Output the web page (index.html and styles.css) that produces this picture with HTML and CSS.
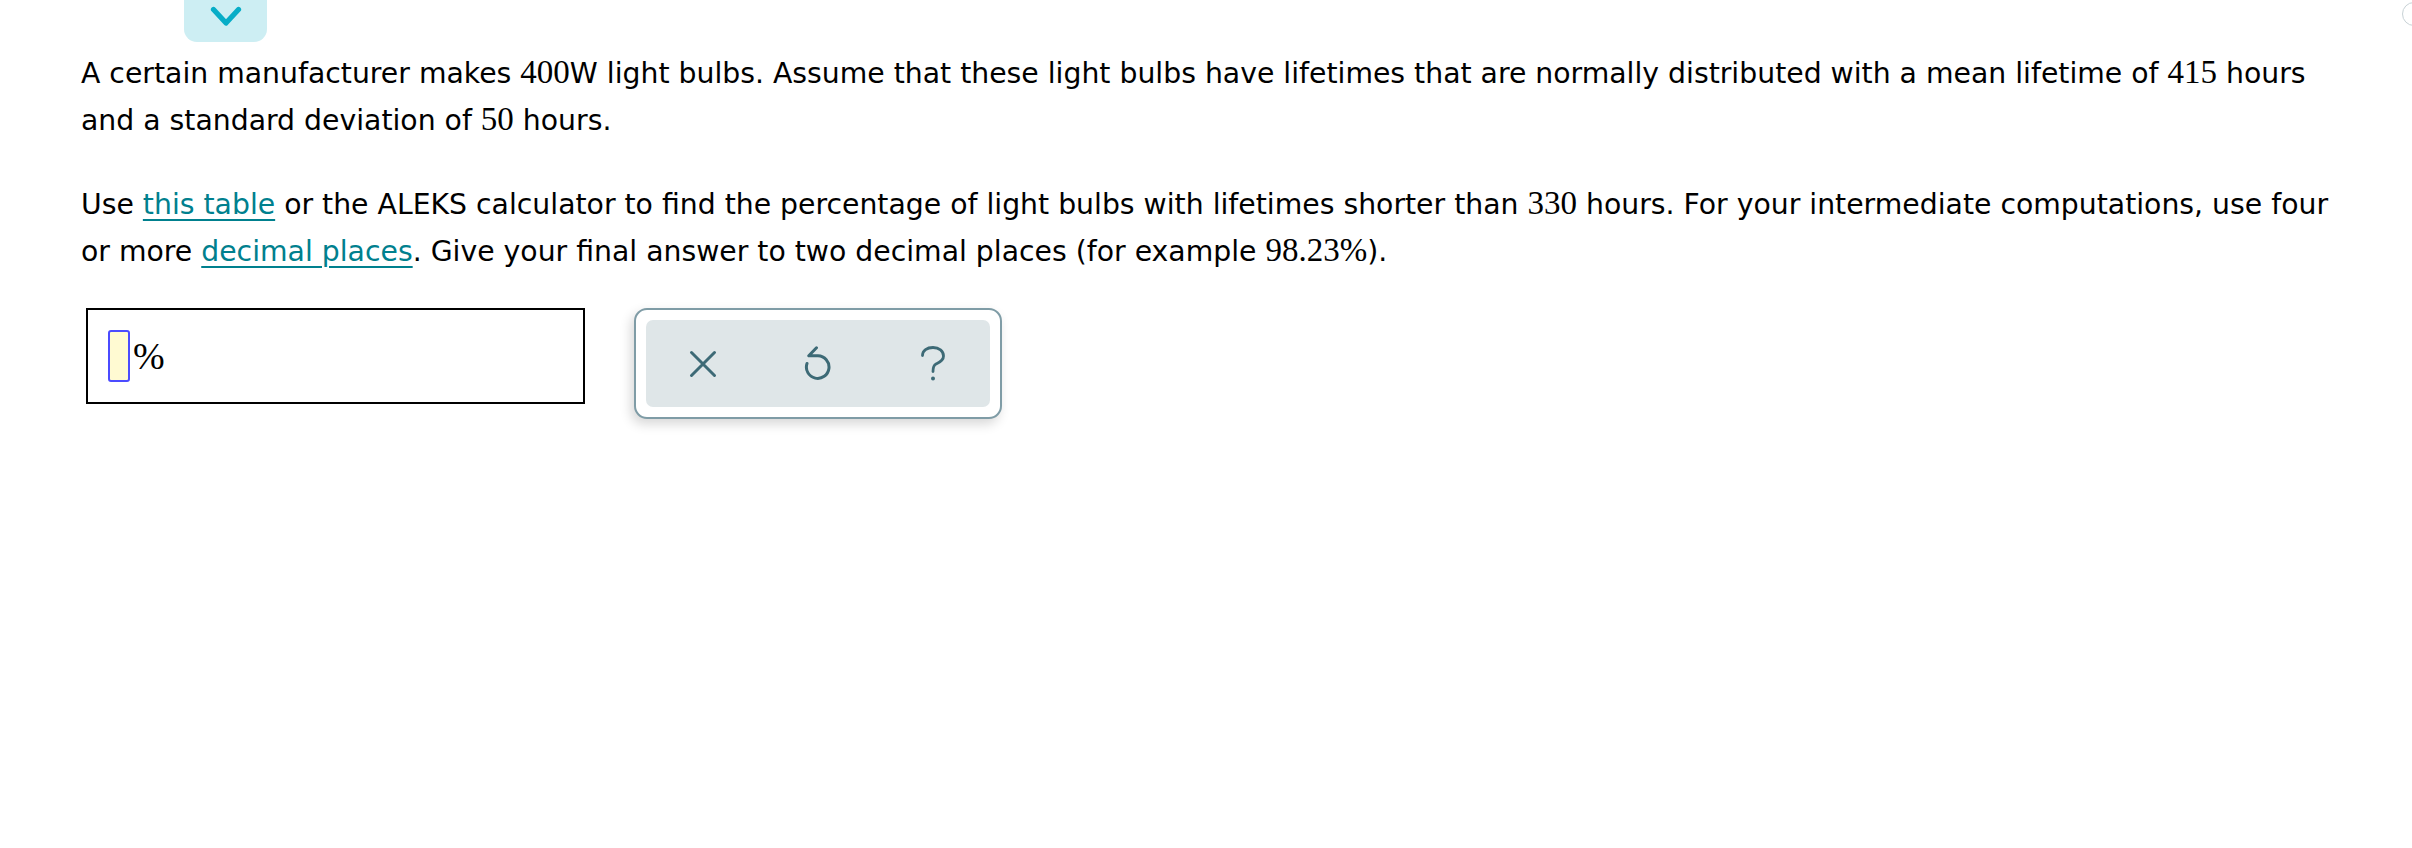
FILE: index.html
```html
<!DOCTYPE html>
<html lang="en">
<head>
<meta charset="utf-8">
<title>ALEKS question</title>
<link rel="stylesheet" href="styles.css">
</head>
<body>
<div class="page">
  <div class="topbar">
    <div class="tab">
      <svg class="chevron" width="32" height="22" viewBox="0 0 32 22"><polyline points="3.5,3.5 16,17 28.5,3.5" fill="none" stroke="#07adc7" stroke-width="5.2" stroke-linecap="round" stroke-linejoin="round"/></svg>
    </div>
  </div>
  <div class="content">
    <p class="para first">A certain manufacturer makes <span class="m">400</span>W light bulbs. Assume that these light bulbs have lifetimes that are normally distributed with a mean lifetime of <span class="m">415</span> hours<br>and a standard deviation of <span class="m">50</span> hours.</p>
    <p class="para">Use <a class="link" href="#">this table</a> or the ALEKS calculator to find the percentage of light bulbs with lifetimes shorter than <span class="m">330</span> hours. For your intermediate computations, use four<br>or more <a class="link" href="#">decimal places</a>. Give your final answer to two decimal places (for example <span class="m">98.23%</span>).</p>
    <div class="answer-row">
      <div class="answer-box">
        <span class="input"></span><span class="pct">%</span>
      </div>
      <div class="tools">
        <div class="tools-inner">
          <div class="tool">
            <svg width="28" height="28" viewBox="0 0 28 28"><path d="M2.5 2.5 L25.5 25.5 M25.5 2.5 L2.5 25.5" fill="none" stroke="#3d6a76" stroke-width="3" stroke-linecap="round"/></svg>
          </div>
          <div class="tool">
            <svg width="30" height="36" viewBox="0 0 30 36"><path d="M13.5 1.8 L5.8 9.8 L15 9.8 A11.3 11.3 0 1 1 4 17.5" fill="none" stroke="#3d6a76" stroke-width="3" stroke-linecap="round" stroke-linejoin="round"/></svg>
          </div>
          <div class="tool">
            <svg width="26" height="36" viewBox="0 0 26 36"><path d="M2.5 9.5 C2.5 4.5 7 1.5 13 1.5 C19 1.5 23.5 5 23.5 10 C23.5 15 19 16.5 16 18 C13.6 19.2 13 21 13 25.5" fill="none" stroke="#3d6a76" stroke-width="2.8" stroke-linecap="round"/><circle cx="13" cy="32.5" r="2" fill="#3d6a76"/></svg>
          </div>
        </div>
      </div>
    </div>
  </div>
</div>
<div class="corner-circle"></div>
</body>
</html>
```
FILE: styles.css
```css
html, body {
  margin: 0;
  padding: 0;
  background: #ffffff;
  overflow: hidden;
}

body {
  font-family: "DejaVu Sans", Verdana, sans-serif;
  color: #000000;
  width: 2412px;
  height: 848px;
  position: relative;
}

.topbar {
  height: 42px;
  padding-left: 184px;
}

.tab {
  width: 83px;
  height: 42px;
  background: #cdeef3;
  border-radius: 0 0 13px 13px;
  display: flex;
  justify-content: center;
  align-items: flex-start;
  padding-top: 6px;
  box-sizing: border-box;
}

.chevron {
  display: block;
}

.content {
  padding-left: 81px;
  padding-top: 9px;
}

.para {
  margin: 0;
  font-size: 28.3px;
  line-height: 46.5px;
  white-space: nowrap;
}

.para.first {
  margin-bottom: 38px;
}

.m {
  font-family: "Liberation Serif", "Times New Roman", serif;
  font-size: 33px;
  line-height: 1;
}

.link {
  color: #00808e;
  text-decoration: underline;
  text-decoration-thickness: 2px;
  text-underline-offset: 5px;
}

.answer-row {
  display: flex;
  align-items: flex-start;
  margin-top: 33px;
  padding-left: 5px;
}

.answer-box {
  width: 499px;
  height: 96px;
  box-sizing: border-box;
  border: 2px solid #000000;
  display: flex;
  align-items: center;
  padding-left: 20px;
}

.input {
  display: block;
  width: 22px;
  height: 52px;
  box-sizing: border-box;
  border: 2px solid #4b4bff;
  border-radius: 3px;
  background: #fffad2;
}

.pct {
  font-family: "Liberation Serif", "Times New Roman", serif;
  font-size: 38px;
  line-height: 1;
  margin-left: 3px;
}

.tools {
  margin-left: 49px;
  width: 368px;
  height: 111px;
  box-sizing: border-box;
  border: 2px solid #7f9ca6;
  border-radius: 13px;
  padding: 10px;
  background: #ffffff;
  box-shadow: -3px 5px 12px rgba(0, 0, 0, 0.16);
}

.tools-inner {
  height: 100%;
  background: #dfe6e8;
  border-radius: 7px;
  display: grid;
  grid-template-columns: repeat(3, 1fr);
  align-items: center;
}

.tool {
  display: flex;
  justify-content: center;
  align-items: center;
}

.tool svg {
  display: block;
}

.corner-circle {
  position: absolute;
  top: 2px;
  right: -14px;
  width: 22px;
  height: 22px;
  border: 1.5px solid #c8d2d6;
  border-radius: 50%;
}
```
